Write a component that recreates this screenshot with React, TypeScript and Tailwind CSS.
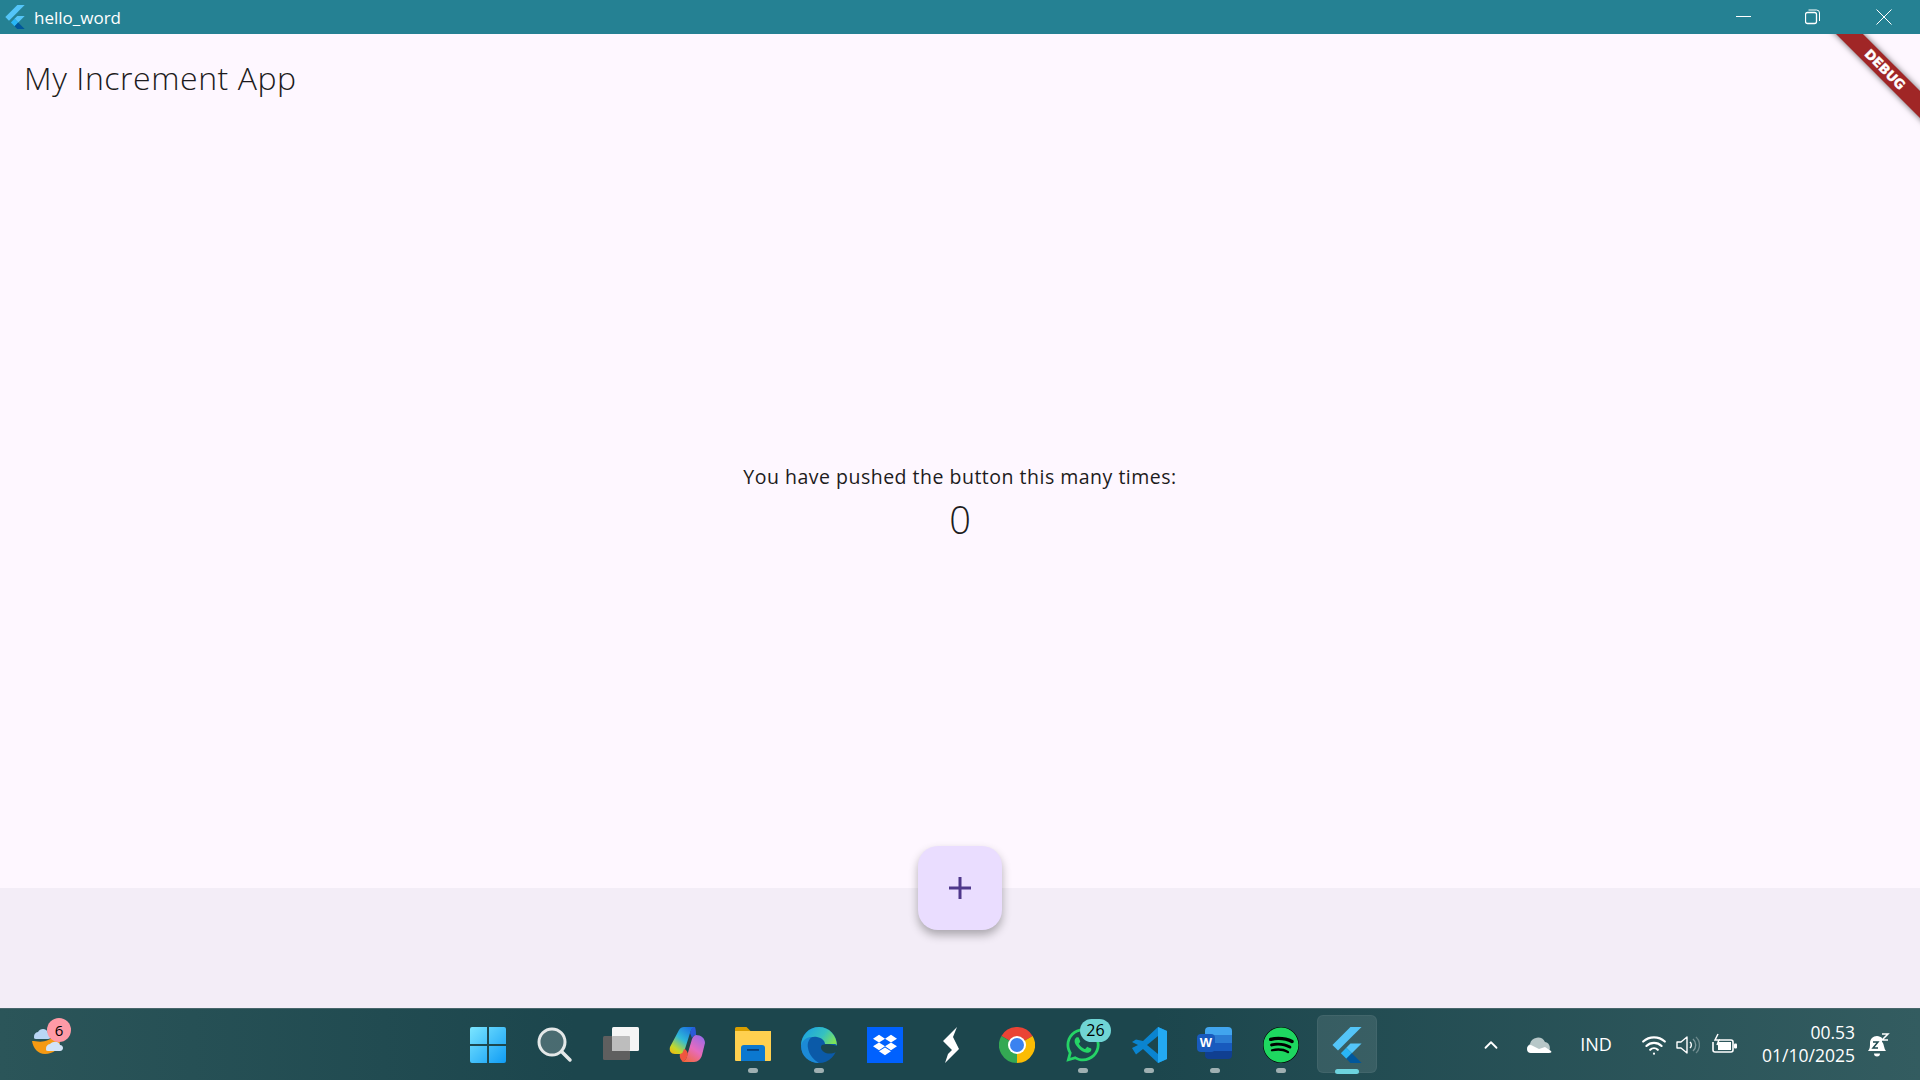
import { ChevronUp, Wifi } from 'lucide-react'
import { FaDropbox, FaSpotify, FaWhatsapp } from 'react-icons/fa'
import type { ReactNode } from 'react'

function FlutterLogo({ size }: { size: number }) {
    return (
        <svg width={size} height={size} viewBox="0 0 24 24">
            <polygon points="14.3,0 21.7,0 6,15.7 2.3,12" fill="#54c5f8" />
            <polygon points="14.3,11 21.7,11 15.2,17.5 11.5,13.8" fill="#54c5f8" />
            <polygon points="7.9,17.5 11.5,13.8 15.2,17.5 11.6,21.2" fill="#29b6f6" />
            <polygon points="11.6,21.2 15.2,17.5 21.7,24 14.3,24" fill="#01579b" />
        </svg>
    )
}

function StartIcon() {
    return (
        <svg width="36" height="36" viewBox="0 0 36 36" className="mr-[2px]">
            <defs>
                <linearGradient id="startGrad" x1="0" y1="0" x2="1" y2="1">
                    <stop offset="0" stopColor="#7be6ff" />
                    <stop offset="1" stopColor="#0f9cf5" />
                </linearGradient>
            </defs>
            <path d="M2 0h15v17H0V2a2 2 0 0 1 2-2zM19 0h15a2 2 0 0 1 2 2v15H19zM0 19h17v17H2a2 2 0 0 1-2-2zM19 19h17v15a2 2 0 0 1-2 2H19z" fill="url(#startGrad)" />
        </svg>
    )
}

function SearchIcon() {
    return (
        <svg width="36" height="36" viewBox="0 0 36 36">
            <circle cx="15" cy="15" r="13" fill="#ffffff" fillOpacity="0.2" stroke="#e4e8e8" strokeWidth="3" />
            <line x1="25" y1="25" x2="33" y2="33" stroke="#e4e8e8" strokeWidth="3.5" strokeLinecap="round" />
        </svg>
    )
}

function TaskViewIcon() {
    return (
        <svg width="36" height="36" viewBox="0 0 36 36">
            <rect x="0" y="9" width="27" height="24" rx="1.5" fill="#5f5f5f" />
            <rect x="9" y="0" width="27" height="24" rx="1.5" fill="#f5f5f5" />
            <rect x="9" y="9" width="18" height="15" rx="1" fill="#bdbdbd" />
        </svg>
    )
}

function CopilotIcon() {
    return (
        <svg width="36" height="36" viewBox="0 0 36 36">
            <defs>
                <linearGradient id="copA" x1="0.8" y1="0" x2="0.1" y2="1">
                    <stop offset="0" stopColor="#1b6fe0" />
                    <stop offset="0.45" stopColor="#2fb9d8" />
                    <stop offset="0.8" stopColor="#c4d82a" />
                    <stop offset="1" stopColor="#f2b90f" />
                </linearGradient>
                <linearGradient id="copB" x1="0.8" y1="0" x2="0.2" y2="1">
                    <stop offset="0" stopColor="#9a6be8" />
                    <stop offset="0.5" stopColor="#e66bbd" />
                    <stop offset="1" stopColor="#f2683c" />
                </linearGradient>
            </defs>
            <path d="M10 3C11 1 13 0 15 0h11c-3 1-4 3-5 6l-5 16c-1 3-2 5-5 5H6C2 27 0 24 1 20z" fill="url(#copA)" />
            <path d="M27 8c5 0 9 3 9 8l-3 12c-1 4-4 7-8 7H12c3 0 5-2 6-6l5-17c1-2 2-4 4-4z" fill="url(#copB)" />
            <path d="M15 22c1 0 3 1 4 5-1 4-3 7-5 8-2-2-4-5-3-8 2 0 3-2 4-5z" fill="#f0563f" />
            <path d="M21 6c1-3 2-6 5-6 1 3 1 6 1 8-2 0-3 1-4 3z" fill="#2a5ad8" />
        </svg>
    )
}

function FolderIcon() {
    return (
        <svg width="36" height="36" viewBox="0 0 36 36">
            <path d="M0 1.5A1.5 1.5 0 0 1 1.5 0h10l4 4H36v6H0z" fill="#d99e00" />
            <path d="M0 4h36v29a1 1 0 0 1-1 1H1a1 1 0 0 1-1-1z" fill="#ffd04f" />
            <path d="M6 21a3 3 0 0 1 3-3h18a3 3 0 0 1 3 3v13H6z" fill="#0b78d0" />
            <rect x="12" y="22" width="12" height="1.8" fill="#063f7a" />
        </svg>
    )
}

function EdgeIcon() {
    return (
        <svg width="36" height="36" viewBox="0 0 36 36">
            <defs>
                <linearGradient id="edgeA" x1="0" y1="0.2" x2="1" y2="0.6">
                    <stop offset="0" stopColor="#1ba0e2" />
                    <stop offset="0.6" stopColor="#35c1c0" />
                    <stop offset="1" stopColor="#7ee35a" />
                </linearGradient>
            </defs>
            <circle cx="18" cy="18" r="18" fill="#0b5aa8" />
            <path d="M36 19C36 8 28 0 18 0 8 0 0 8 0 19c4-7 10-10 16-9 5 1 8 4 8 7h10c1 0 2 1 2 2z" fill="url(#edgeA)" />
            <path d="M0 19c1-6 6-9 11-9-3 2-5 6-4 11 1 7 6 12 11 15C8 36 0 29 0 19z" fill="#1c8ad6" />
            <path d="M21 18c3-1 9-1 15 1 0 2 0 4-1 6-4 2-9 2-12 0-3-2-4-5-2-7z" fill="#1c464d" />
        </svg>
    )
}

function SparrowIcon() {
    return (
        <svg width="36" height="36" viewBox="0 0 36 36">
            <polygon points="24,0 20,10 26,22 12,36 15,27 19,23 10,14" fill="#ffffff" />
        </svg>
    )
}

function ChromeIcon() {
    return (
        <svg width="36" height="36" viewBox="0 0 36 36">
            <path d="M18 18 L2.4 9 A18 18 0 0 1 33.6 9 Z" fill="#ea4335" />
            <path d="M18 18 L33.6 9 A18 18 0 0 1 18 36 Z" fill="#fbbc04" />
            <path d="M18 18 L18 36 A18 18 0 0 1 2.4 9 Z" fill="#34a853" />
            <circle cx="18" cy="18" r="9" fill="#ffffff" />
            <circle cx="18" cy="18" r="7" fill="#3b82f0" />
        </svg>
    )
}

function VsCodeIcon() {
    return (
        <svg width="36" height="36" viewBox="0 0 36 36">
            <path d="M27 0 36 4v28l-9 4-15-14-7 5.500L1 21l6-3-6-3 4-2.500L12 14z" fill="#0a84d0" />
            <path d="M27 0 36 4v28l-9 4z" fill="#23a9f2" />
            <path d="M27 9 16 18l11 9z" fill="#1c464d" />
        </svg>
    )
}

function WordIcon() {
    return (
        <div className="relative w-[36px] h-[36px]">
            <div className="absolute left-[8px] top-0 w-[27px] h-[32px] rounded-sm overflow-hidden flex flex-col">
                <div className="flex-1 bg-[#41a5ee]" />
                <div className="flex-1 bg-[#2b7cd3]" />
                <div className="flex-1 bg-[#185abd]" />
                <div className="flex-1 bg-[#103f91]" />
            </div>
            <div className="absolute left-0 top-[7px] w-[18px] h-[18px] rounded-sm bg-[#185abd] flex items-center justify-center text-white text-[13px] font-bold font-['Liberation_Sans',sans-serif]">
                W
            </div>
        </div>
    )
}

function WeatherIcon() {
    return (
        <svg width="40" height="36" viewBox="0 0 40 36">
            <path d="M2 18c5 0 16 4 24-8 2 2 4 4 4 8 0 8-7 13-15 13C8 31 3 25 2 18z" fill="#f59a13" />
            <path d="M4 14a5 5 0 0 1 4-5c2-4 9-4 10 1 4 0 4 6 0 6H6c-2 0-2-1-2-2z" fill="#b9d6f5" />
            <path d="M16 26a5 5 0 0 1 4-5c3-3 9-3 10 1 4 0 4 6 0 6H18c-2 0-2-1-2-2z" fill="#d2e4f8" />
        </svg>
    )
}

function SpeakerIcon() {
    return (
        <svg width="24" height="24" viewBox="0 0 24 24" fill="none" stroke="#ffffff" strokeWidth="1.4">
            <path d="M1 9h4l6-5v16l-6-5H1z" strokeLinejoin="round" />
            <path d="M14 9a4 4 0 0 1 0 6" />
            <path d="M17 6a8 8 0 0 1 0 12" strokeOpacity="0.4" />
            <path d="M20 4a11 11 0 0 1 0 16" strokeOpacity="0.3" />
        </svg>
    )
}

function BatteryIcon() {
    return (
        <svg width="26" height="24" viewBox="0 0 26 24" fill="none" stroke="#ffffff" strokeWidth="1.6">
            <path d="M7 7h12a2 2 0 0 1 2 2v8a2 2 0 0 1-2 2H3a2 2 0 0 1-2-2v-8" />
            <rect x="6" y="9" width="13" height="8" fill="#ffffff" stroke="none" />
            <rect x="22" y="10.500" width="3" height="5" rx="1" fill="#ffffff" stroke="none" />
            <path d="M6 1 3 7h4l-2 5" strokeWidth="1.5" />
        </svg>
    )
}

function BellIcon() {
    return (
        <svg width="24" height="24" viewBox="0 0 24 24" fill="none">
            <path d="M2 18c2-2 2-5 2-8 0-4 3-7 7-7 2 0 4 1 5 2v4c2 1 2 7 4 9z" fill="#ffffff" />
            <path d="M8 20.500a3 3 0 0 0 6 0z" fill="#ffffff" />
            <path d="M7 9h5l-5 6h5" stroke="#1f4a50" strokeWidth="1.5" />
            <path d="M16 1h6l-6 6h6" stroke="#ffffff" strokeWidth="1.5" />
        </svg>
    )
}

function TaskbarItem({ children, dot, active }: { children: ReactNode; dot?: boolean; active?: boolean }) {
    return (
        <div className="relative w-[66px] h-full flex items-center justify-center">
            {active && (
                <div className="absolute left-[3px] right-[3px] top-[6px] bottom-[7px] rounded-md bg-white/10 border border-white/5" />
            )}
            <div className="relative">{children}</div>
            {dot && <div className="absolute left-[28px] bottom-[7px] w-[10px] h-[5px] rounded-full bg-[#9fb0b2]" />}
            {active && <div className="absolute left-[21px] bottom-[6px] w-[24px] h-[5px] rounded-full bg-[#6dd3de]" />}
        </div>
    )
}

function App() {
    return (
        <div className="w-[1920px] h-[1080px] flex flex-col overflow-hidden font-['Open_Sans',sans-serif] text-[#1d1b20]">
            {/* title bar */}
            <div className="h-[34px] bg-[#258193] flex items-center text-white">
                <div className="ml-[3px]">
                    <FlutterLogo size={24} />
                </div>
                <span className="ml-[7px] text-[17px] leading-none">hello_word</span>
                <div className="ml-auto flex items-center">
                    <svg width="16" height="16" viewBox="0 0 16 16" className="mr-[53px]">
                        <line x1="0" y1="7.500" x2="15" y2="7.500" stroke="#ffffff" />
                    </svg>
                    <svg width="16" height="16" viewBox="0 0 16 16" fill="none" stroke="#ffffff" className="mr-[55px]">
                        <rect x="0.500" y="3.500" width="11" height="11" rx="2" strokeWidth="1.300" />
                        <path d="M3.500 1h8a3 3 0 0 1 3 3v8" />
                    </svg>
                    <svg width="16" height="16" viewBox="0 0 16 16" stroke="#ffffff" className="mr-[28px]">
                        <line x1="0.500" y1="0.500" x2="15.500" y2="15.500" />
                        <line x1="15.500" y1="0.500" x2="0.500" y2="15.500" />
                    </svg>
                </div>
            </div>

            {/* app body */}
            <div className="relative flex-1 flex flex-col overflow-hidden">
                <div className="h-[854px] bg-[#fef7ff] flex flex-col">
                    <h1 className="pl-[24px] pt-[24px] text-[32px] leading-[40px] tracking-[0.55px] font-light">My Increment App</h1>
                    <div className="mt-[366px] flex flex-col items-center">
                        <p className="text-[19.500px] leading-[26px] tracking-[0.5px]">You have pushed the button this many times:</p>
                        <p className="text-[38px] leading-[50px] mt-[4px] font-light">0</p>
                    </div>
                </div>
                <div className="flex-1 bg-[#f3edf7]" />

                <button className="absolute left-[918px] top-[812px] w-[84px] h-[84px] rounded-[20px] bg-[#eaddff] flex items-center justify-center shadow-[0_5px_10px_rgba(0,0,0,0.3)]">
                    <svg width="22" height="22" viewBox="0 0 22 22" stroke="#4f378b" strokeWidth="3">
                        <line x1="11" y1="0" x2="11" y2="22" />
                        <line x1="0" y1="11" x2="22" y2="11" />
                    </svg>
                </button>

                <div className="absolute top-[26px] right-[-45px] w-[160px] h-[19px] rotate-45 bg-[#a02626] shadow-[0_0_6px_rgba(0,0,0,0.6)] flex items-center justify-center text-white text-[13px] font-black [-webkit-text-stroke:0.4px_white] font-['DejaVu_Sans',sans-serif]">
                    DEBUG
                </div>
            </div>

            {/* windows taskbar */}
            <div className="h-[72px] flex border-t border-[#47666b] bg-[linear-gradient(90deg,#2b5559,#1c464d_30%,#1c464d_60%,#335c60)] text-white font-['Open_Sans',sans-serif]">
                <div className="w-[456px] pl-[30px] pt-[8px] relative">
                    <div className="mt-[6px]">
                        <WeatherIcon />
                    </div>
                    <div className="absolute left-[47px] top-[9px] w-[24px] h-[24px] rounded-full bg-[#ff9aa6] text-black text-[15px] flex items-center justify-center">
                        6
                    </div>
                </div>

                <div className="flex">
                    <TaskbarItem><StartIcon /></TaskbarItem>
                    <TaskbarItem><SearchIcon /></TaskbarItem>
                    <TaskbarItem><TaskViewIcon /></TaskbarItem>
                    <TaskbarItem><CopilotIcon /></TaskbarItem>
                    <TaskbarItem dot><FolderIcon /></TaskbarItem>
                    <TaskbarItem dot><EdgeIcon /></TaskbarItem>
                    <TaskbarItem>
                        <div className="w-[36px] h-[36px] bg-[#0061fe] flex items-center justify-center">
                            <FaDropbox size={24} color="#ffffff" />
                        </div>
                    </TaskbarItem>
                    <TaskbarItem><SparrowIcon /></TaskbarItem>
                    <TaskbarItem><ChromeIcon /></TaskbarItem>
                    <TaskbarItem dot>
                        <FaWhatsapp size={38} color="#25d366" />
                        <div className="absolute left-[16px] top-[-7px] w-[31px] h-[23px] rounded-full bg-[#70d5d5] text-black text-[16px] flex items-center justify-center">
                            26
                        </div>
                    </TaskbarItem>
                    <TaskbarItem dot><VsCodeIcon /></TaskbarItem>
                    <TaskbarItem dot><WordIcon /></TaskbarItem>
                    <TaskbarItem dot><FaSpotify size={36} color="#1ed760" className="bg-black rounded-full" /></TaskbarItem>
                    <TaskbarItem active><FlutterLogo size={36} /></TaskbarItem>
                </div>

                <div className="flex-1 flex items-center pl-[100px]">
                    <ChevronUp size={22} color="#ffffff" />
                    <svg width="26" height="18" viewBox="0 0 26 18" className="ml-[24px]">
                        <path d="M5 17a5 5 0 0 1-1-9 8 8 0 0 1 15-2 6 6 0 0 1 2 11z" fill="#b7c7c8" />
                        <path d="M5 17a4 4 0 0 1 0-8l8 4 6-2 6 4c1 1 0 2-2 2z" fill="#ffffff" />
                    </svg>
                    <span className="ml-[28px] w-[32px] text-[18px] text-center">IND</span>
                    <Wifi size={26} color="#ffffff" className="ml-[29px]" />
                    <div className="ml-[9px]"><SpeakerIcon /></div>
                    <div className="ml-[12px]"><BatteryIcon /></div>
                    <div className="ml-auto mb-[2px] flex flex-col items-end text-[17.500px] leading-[23px]">
                        <span>00.53</span>
                        <span>01/10/2025</span>
                    </div>
                    <div className="ml-[11px] mr-[30px]"><BellIcon /></div>
                </div>
            </div>
        </div>
    )
}

export default App
